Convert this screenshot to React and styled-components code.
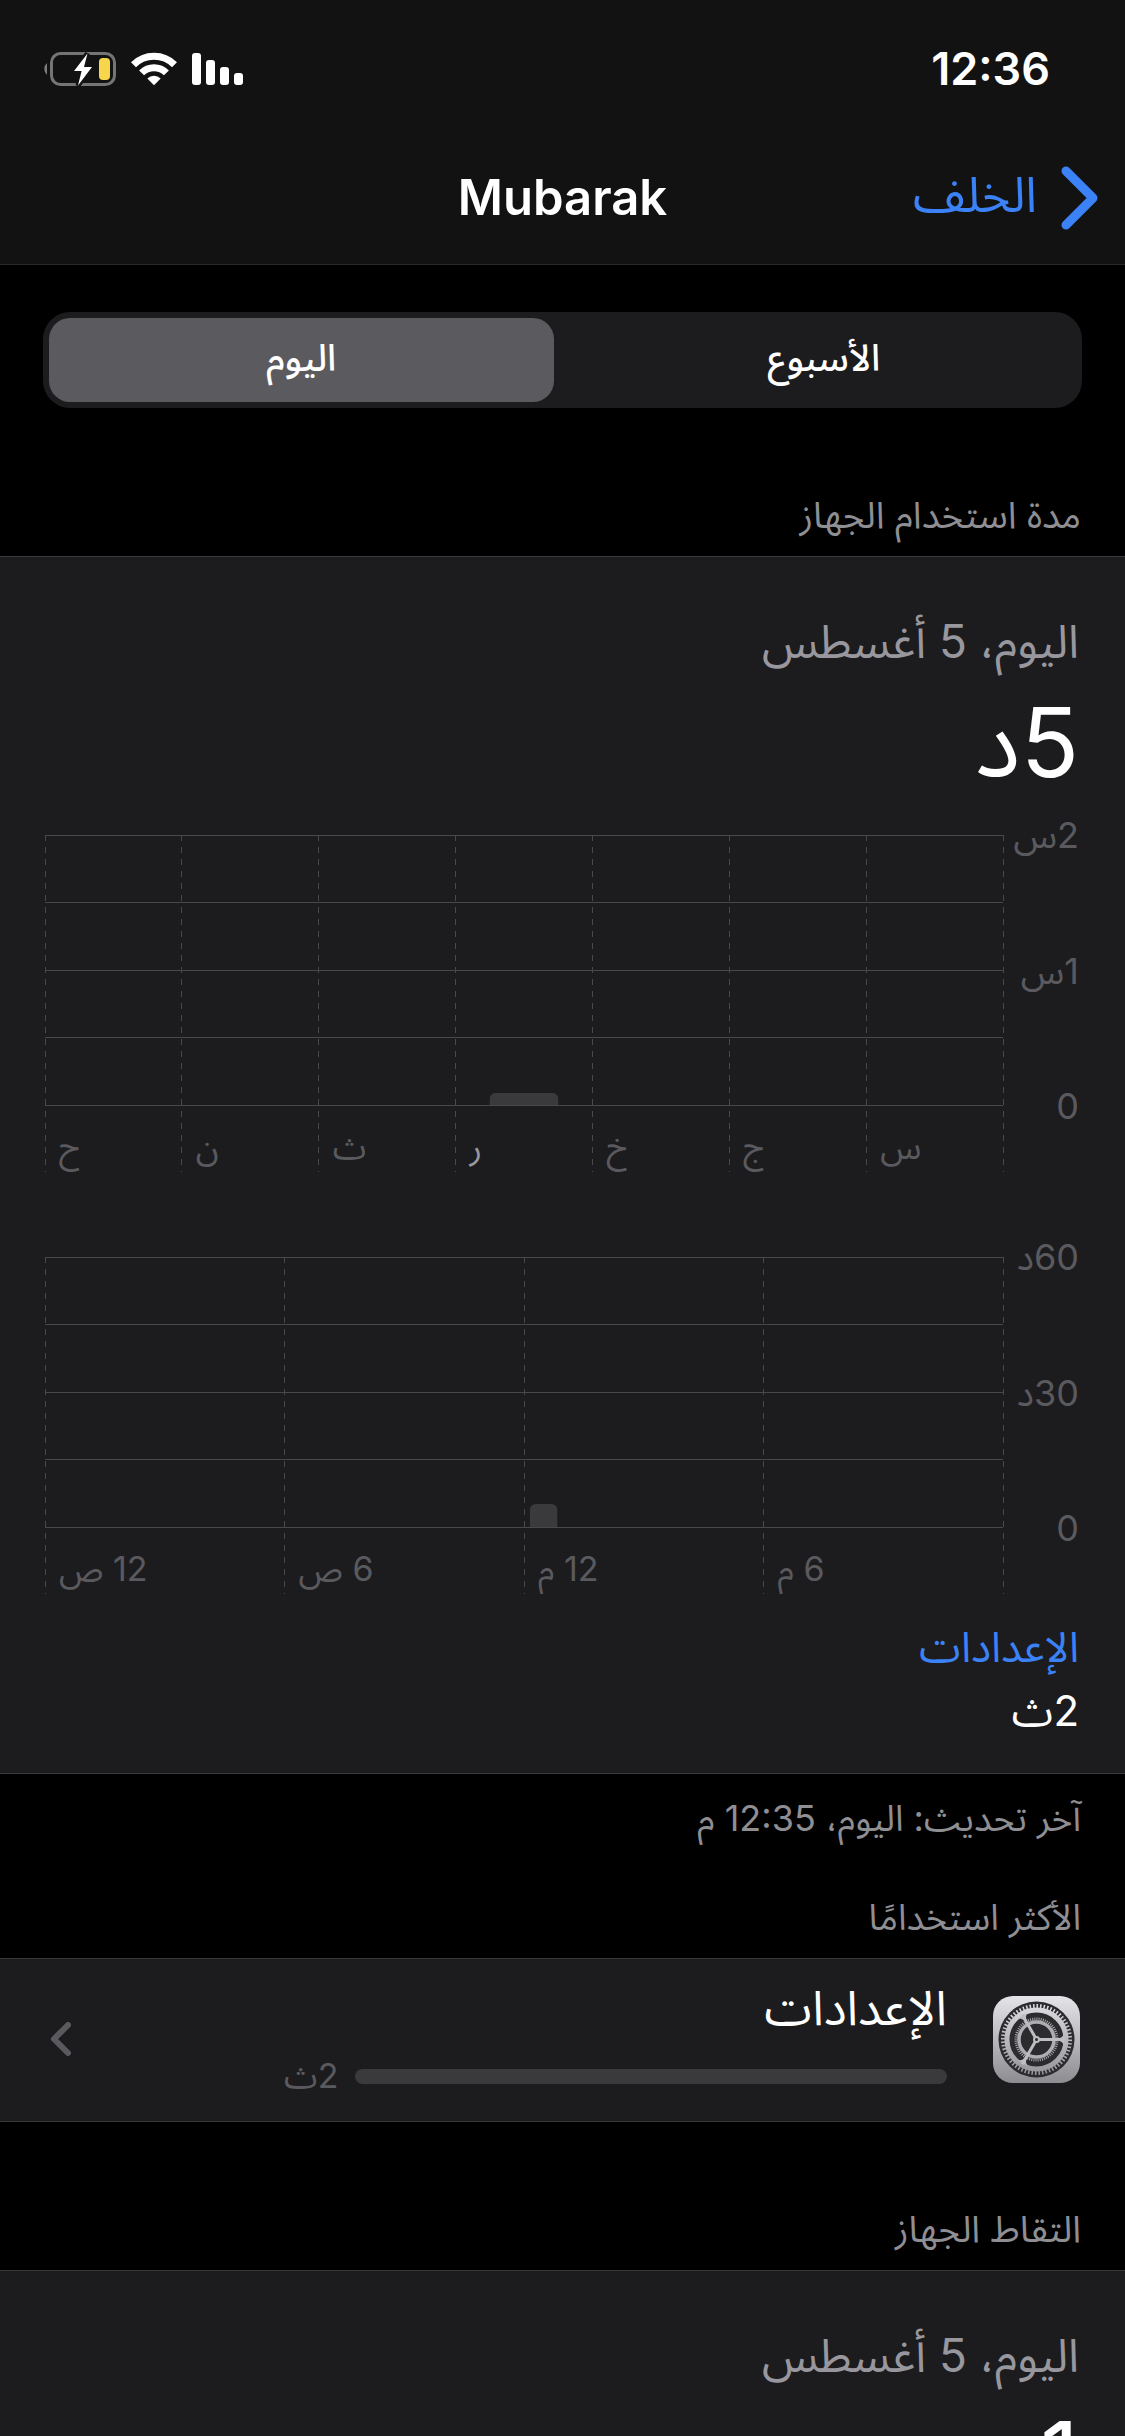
/**
 * External dependencies
 */
import React, { useState } from "react";
import styled, { createGlobalStyle } from "styled-components";

const GRID_LINES = [0, 67, 135, 202, 270];

const WEEK = {
	scale: ["2س", "1س", "0"],
	labels: ["ح", "ن", "ث", "ر", "خ", "ج", "س"],
	current: 3,
	bar: { start: 46.4, width: 7.2, height: 12 },
};

const DAY = {
	scale: ["60د", "30د", "0"],
	labels: ["12 ص", "6 ص", "12 م", "6 م"],
	bar: { start: 50.6, width: 2.9, height: 23 },
};

const BatteryIcon = () => (
	<svg width="73" height="34" viewBox="0 0 73 34" aria-hidden="true">
		<path d="M4 11 a8 8 0 0 0 0 12 z" fill="#7d7d7d" />
		<rect x="8.5" y="1.5" width="63" height="31" rx="9" fill="none" stroke="#757575" strokeWidth="3" />
		<rect x="56" y="6" width="11" height="22" rx="4" fill="#f8d64b" />
		<path
			d="M44.5 1.5 L31 19 H38.6 L35 33.5 L49 15 H41 Z"
			fill="#ffffff"
			stroke="#121212"
			strokeWidth="5"
			paintOrder="stroke"
		/>
	</svg>
);

const WifiIcon = () => (
	<svg width="46" height="34" viewBox="0 0 46 34" aria-hidden="true">
		<g fill="none" stroke="#ffffff" strokeWidth="7">
			<path d="M2.5 12.8 A29 29 0 0 1 43.5 12.8" />
			<path d="M10.6 20.9 A17.5 17.5 0 0 1 35.4 20.9" />
		</g>
		<path d="M23 33.3 L16.3 26.6 A9.5 9.5 0 0 1 29.7 26.6 Z" fill="#ffffff" />
	</svg>
);

const SignalIcon = () => (
	<svg width="51" height="34" viewBox="0 0 51 34" fill="#ffffff" aria-hidden="true">
		<rect x="0" y="1" width="9" height="32" rx="3" />
		<rect x="14" y="8" width="9" height="25" rx="3" />
		<rect x="28" y="15" width="9" height="18" rx="3" />
		<rect x="42" y="21" width="9" height="12" rx="3" />
	</svg>
);

const BackIcon = () => (
	<svg width="37" height="64" viewBox="0 0 37 64" aria-hidden="true">
		<path
			d="M5 5 L32 32 L5 59"
			fill="none"
			stroke="#3b82f7"
			strokeWidth="9"
			strokeLinecap="round"
			strokeLinejoin="round"
		/>
	</svg>
);

const DisclosureIcon = () => (
	<svg width="21" height="34" viewBox="0 0 21 34" aria-hidden="true">
		<path
			d="M18 3 L4 17 L18 31"
			fill="none"
			stroke="#5a5a5e"
			strokeWidth="6"
			strokeLinecap="round"
			strokeLinejoin="round"
		/>
	</svg>
);

const SettingsIcon = () => (
	<svg width="87" height="87" viewBox="0 0 87 87" aria-hidden="true">
		<defs>
			<linearGradient id="metal" gradientUnits="userSpaceOnUse" x1="0" y1="0" x2="0" y2="87">
				<stop offset="0" stopColor="#e4e4e9" />
				<stop offset="1" stopColor="#8c8c91" />
			</linearGradient>
		</defs>
		<rect width="87" height="87" rx="20" fill="url(#metal)" />
		<circle cx="43.5" cy="43.5" r="38" fill="#2c2c2e" />
		<g fill="none" stroke="url(#metal)">
			<circle cx="43.5" cy="43.5" r="33.5" strokeWidth="4" pathLength="120" strokeDasharray="0.9 1.1" />
			<circle cx="43.5" cy="43.5" r="29.5" strokeWidth="5" />
		</g>
		<g fill="none" stroke="#adadb2">
			<circle cx="43.5" cy="43.5" r="20.5" strokeWidth="3" pathLength="120" strokeDasharray="0.9 1.1" />
			<circle cx="43.5" cy="43.5" r="17.5" strokeWidth="3.5" />
		</g>
		{/* Three spokes, flared where they meet the outer ring */}
		<g fill="none" stroke="#bdbdc2" strokeWidth="3">
			<path d="M43.5 43.5 H72 M43.5 43.5 L29.25 18.8 M43.5 43.5 L29.25 68.2" />
		</g>
		<g fill="#bdbdc2">
			<path d="M65 42.5 Q69 42 71 38 V49 Q69 45 65 44.5 Z" />
			<path d="M65 42.5 Q69 42 71 38 V49 Q69 45 65 44.5 Z" transform="rotate(120 43.5 43.5)" />
			<path d="M65 42.5 Q69 42 71 38 V49 Q69 45 65 44.5 Z" transform="rotate(240 43.5 43.5)" />
			<circle cx="43.5" cy="43.5" r="3.5" />
		</g>
		<circle cx="43.5" cy="43.5" r="1.5" fill="#2c2c2e" />
	</svg>
);

const UsageChart = ({ name, data }) => {
	const { scale, labels, current, bar } = data;
	const columns = [...labels.map((label, i) => i), labels.length];

	return (
		<Chart role="img" aria-label={name}>
			<Plot>
				<Lines aria-hidden="true">
					{GRID_LINES.map((y) => (
						<line key={y} x1="0" x2="100%" y1={y + 0.5} y2={y + 0.5} />
					))}
					{columns.map((i) => {
						const x = `${(i / labels.length) * 100}%`;
						return <line key={i} x1={x} x2={x} y1="0" y2="337" strokeDasharray="6 6" />;
					})}
					<svg x={`${bar.start}%`} y={270 - bar.height} width={`${bar.width}%`} height={bar.height}>
						<rect width="100%" height={bar.height + 10} rx="6" fill="#3a3a3c" />
					</svg>
				</Lines>
				<Labels $count={labels.length}>
					{labels.map((label, i) => (
						<Label key={label} $active={i === current}>
							{label}
						</Label>
					))}
				</Labels>
			</Plot>
			<Scale>
				{scale.map((value) => (
					<span key={value}>{value}</span>
				))}
			</Scale>
		</Chart>
	);
};

const App = () => {
	const [period, setPeriod] = useState("day");

	return (
		<Page dir="rtl" lang="ar">
			<GlobalStyle />
			<Header>
				<StatusBar>
					<Time>12:36</Time>
					<StatusIcons>
						<SignalIcon />
						<WifiIcon />
						<BatteryIcon />
					</StatusIcons>
				</StatusBar>
				<NavBar>
					<BackButton type="button">
						<BackIcon />
						<BackText>الخلف</BackText>
					</BackButton>
					<Title>Mubarak</Title>
				</NavBar>
			</Header>

			<Content>
				<Segments>
					<Segment type="button" aria-pressed={period === "week"} onClick={() => setPeriod("week")}>
						الأسبوع
					</Segment>
					<Segment type="button" aria-pressed={period === "day"} onClick={() => setPeriod("day")}>
						اليوم
					</Segment>
				</Segments>

				<SectionTitle>مدة استخدام الجهاز</SectionTitle>
				<Panel>
					<DateText>اليوم، 5 أغسطس</DateText>
					<Total>5د</Total>
					<Charts>
						<UsageChart name="الأسبوع" data={WEEK} />
						<UsageChart name="اليوم" data={DAY} />
					</Charts>
					<Legend>
						<LegendName>الإعدادات</LegendName>
						<LegendValue>2ث</LegendValue>
					</Legend>
				</Panel>
				<Updated>آخر تحديث: اليوم، 12:35 م</Updated>

				<SectionTitle $compact>الأكثر استخدامًا</SectionTitle>
				<AppRow type="button">
					<SettingsIcon />
					<AppInfo>
						<AppName>الإعدادات</AppName>
						<Usage>
							<UsageBar />
							<UsageValue>2ث</UsageValue>
						</Usage>
					</AppInfo>
					<DisclosureIcon />
				</AppRow>

				<SectionTitle>التقاط الجهاز</SectionTitle>
				<Panel>
					<DateText>اليوم، 5 أغسطس</DateText>
					<Total>1</Total>
				</Panel>
			</Content>
		</Page>
	);
};

const GlobalStyle = createGlobalStyle`
	*,
	*::before,
	*::after {
		box-sizing: border-box;
	}

	body {
		margin: 0;
		background: #000000;
	}

	button {
		padding: 0;
		border: 0;
		background: none;
		color: inherit;
		font: inherit;
		cursor: pointer;
	}

	svg {
		display: block;
		flex-shrink: 0;
	}
`;

const Page = styled.div`
	display: flex;
	flex-direction: column;
	height: 100vh;
	background: #000000;
	color: #ffffff;
	font-family: Inter, "Noto Sans Arabic", "DejaVu Sans", sans-serif;
	font-size: 36px;
	line-height: 44px;
`;

const Header = styled.header`
	flex-shrink: 0;
	background: #121212;
	border-bottom: 1px solid #29292a;
`;

const StatusBar = styled.div`
	display: flex;
	align-items: center;
	justify-content: space-between;
	height: 132px;
	padding: 6px 75px 0 43px;
`;

const Time = styled.span`
	font-size: 45px;
	font-weight: 600;
`;

const StatusIcons = styled.div`
	display: flex;
	gap: 15px;
`;

const NavBar = styled.nav`
	display: grid;
	grid-template-columns: 1fr auto 1fr;
	align-items: center;
	height: 132px;
	padding: 0 27px;
`;

const BackButton = styled.button`
	display: flex;
	align-items: center;
	justify-self: start;
	gap: 24px;
	color: #3b82f7;
	font-size: 49px;
	line-height: 60px;
`;

const BackText = styled.span`
	padding-bottom: 6px;
`;

const Title = styled.h1`
	margin: 0;
	font-size: 49px;
	font-weight: 600;
	line-height: 60px;
`;

const Content = styled.main`
	flex: 1;
	min-height: 0;
	overflow-y: auto;
	scrollbar-width: none;
`;

const Segments = styled.div`
	display: grid;
	grid-template-columns: 1fr 1fr;
	gap: 18px;
	margin: 47px 43px 0;
	padding: 6px;
	border-radius: 27px;
	background: #1c1c1e;
`;

const Segment = styled.button`
	height: 84px;
	padding-bottom: 4px;
	border-radius: 21px;
	font-size: 37px;
	font-weight: 500;

	&[aria-pressed="true"] {
		background: #5b5a5f;
	}
`;

const SectionTitle = styled.h2`
	margin: 0;
	padding: ${({ $compact }) => ($compact ? "49px" : "82px")} 44px 16px;
	color: #8e8e93;
	font-size: ${({ $compact }) => ($compact ? "36px" : "37px")};
	font-weight: 400;
	line-height: 50px;
`;

const Panel = styled.section`
	padding: 54px 46px 30px 45px;
	border: solid #3a3a3c;
	border-width: 1px 0;
	background: #1c1c1e;
`;

const DateText = styled.p`
	margin: 0;
	color: #98979e;
	font-size: 46px;
	line-height: 60px;
`;

const Total = styled.p`
	margin: 0;
	font-size: 96px;
	line-height: 142px;
`;

const Charts = styled.div`
	display: grid;
	gap: 63px;
`;

const Chart = styled.div`
	display: flex;
	direction: ltr;
`;

const Plot = styled.div`
	position: relative;
	flex: 1;
	height: 359px;
	padding-top: 22px;
`;

const Lines = styled.svg`
	width: 100%;
	height: 337px;
	overflow: visible;
	stroke: #48484a;
	shape-rendering: crispEdges;

	rect {
		stroke: none;
		shape-rendering: auto;
	}
`;

const Labels = styled.div`
	position: absolute;
	right: 0;
	bottom: 3px;
	left: 0;
	display: grid;
	grid-template-columns: repeat(${({ $count }) => $count}, 1fr);
`;

const Label = styled.span`
	padding-left: 14px;
	color: ${({ $active }) => ($active ? "#98979e" : "#5a5a5e")};
	direction: rtl;
	font-size: 34px;
	text-align: left;
`;

const Scale = styled.div`
	display: flex;
	flex-direction: column;
	justify-content: space-between;
	width: 76px;
	height: 315px;
	color: #5a5a5e;
	direction: rtl;
	white-space: nowrap;
`;

const Legend = styled.dl`
	margin: 21px 0 0;
	font-size: 42px;
	line-height: 64px;
`;

const LegendName = styled.dt`
	color: #3b82f7;
`;

const LegendValue = styled.dd`
	margin: 0;
`;

const Updated = styled.p`
	margin: 0;
	padding: 19px 44px 0;
	color: #8e8e93;
	line-height: 50px;
`;

const AppRow = styled.button`
	display: flex;
	align-items: center;
	width: 100%;
	height: 164px;
	padding: 0 45px 2px 50px;
	border: solid #3a3a3c;
	border-width: 1px 0;
	background: #1c1c1e;
	text-align: start;
`;

const AppInfo = styled.span`
	display: flex;
	flex: 1;
	flex-direction: column;
	gap: 18px;
	margin-inline: 46px 213px;
`;

const AppName = styled.span`
	font-size: 48px;
	line-height: 56px;
`;

const Usage = styled.span`
	display: flex;
	align-items: center;
	gap: 16px;
`;

const UsageBar = styled.span`
	flex: 1;
	height: 15px;
	border-radius: 8px;
	background: #3a3a3c;
`;

const UsageValue = styled.span`
	color: #5a5a5e;
	font-size: 34px;
`;

export default App;
